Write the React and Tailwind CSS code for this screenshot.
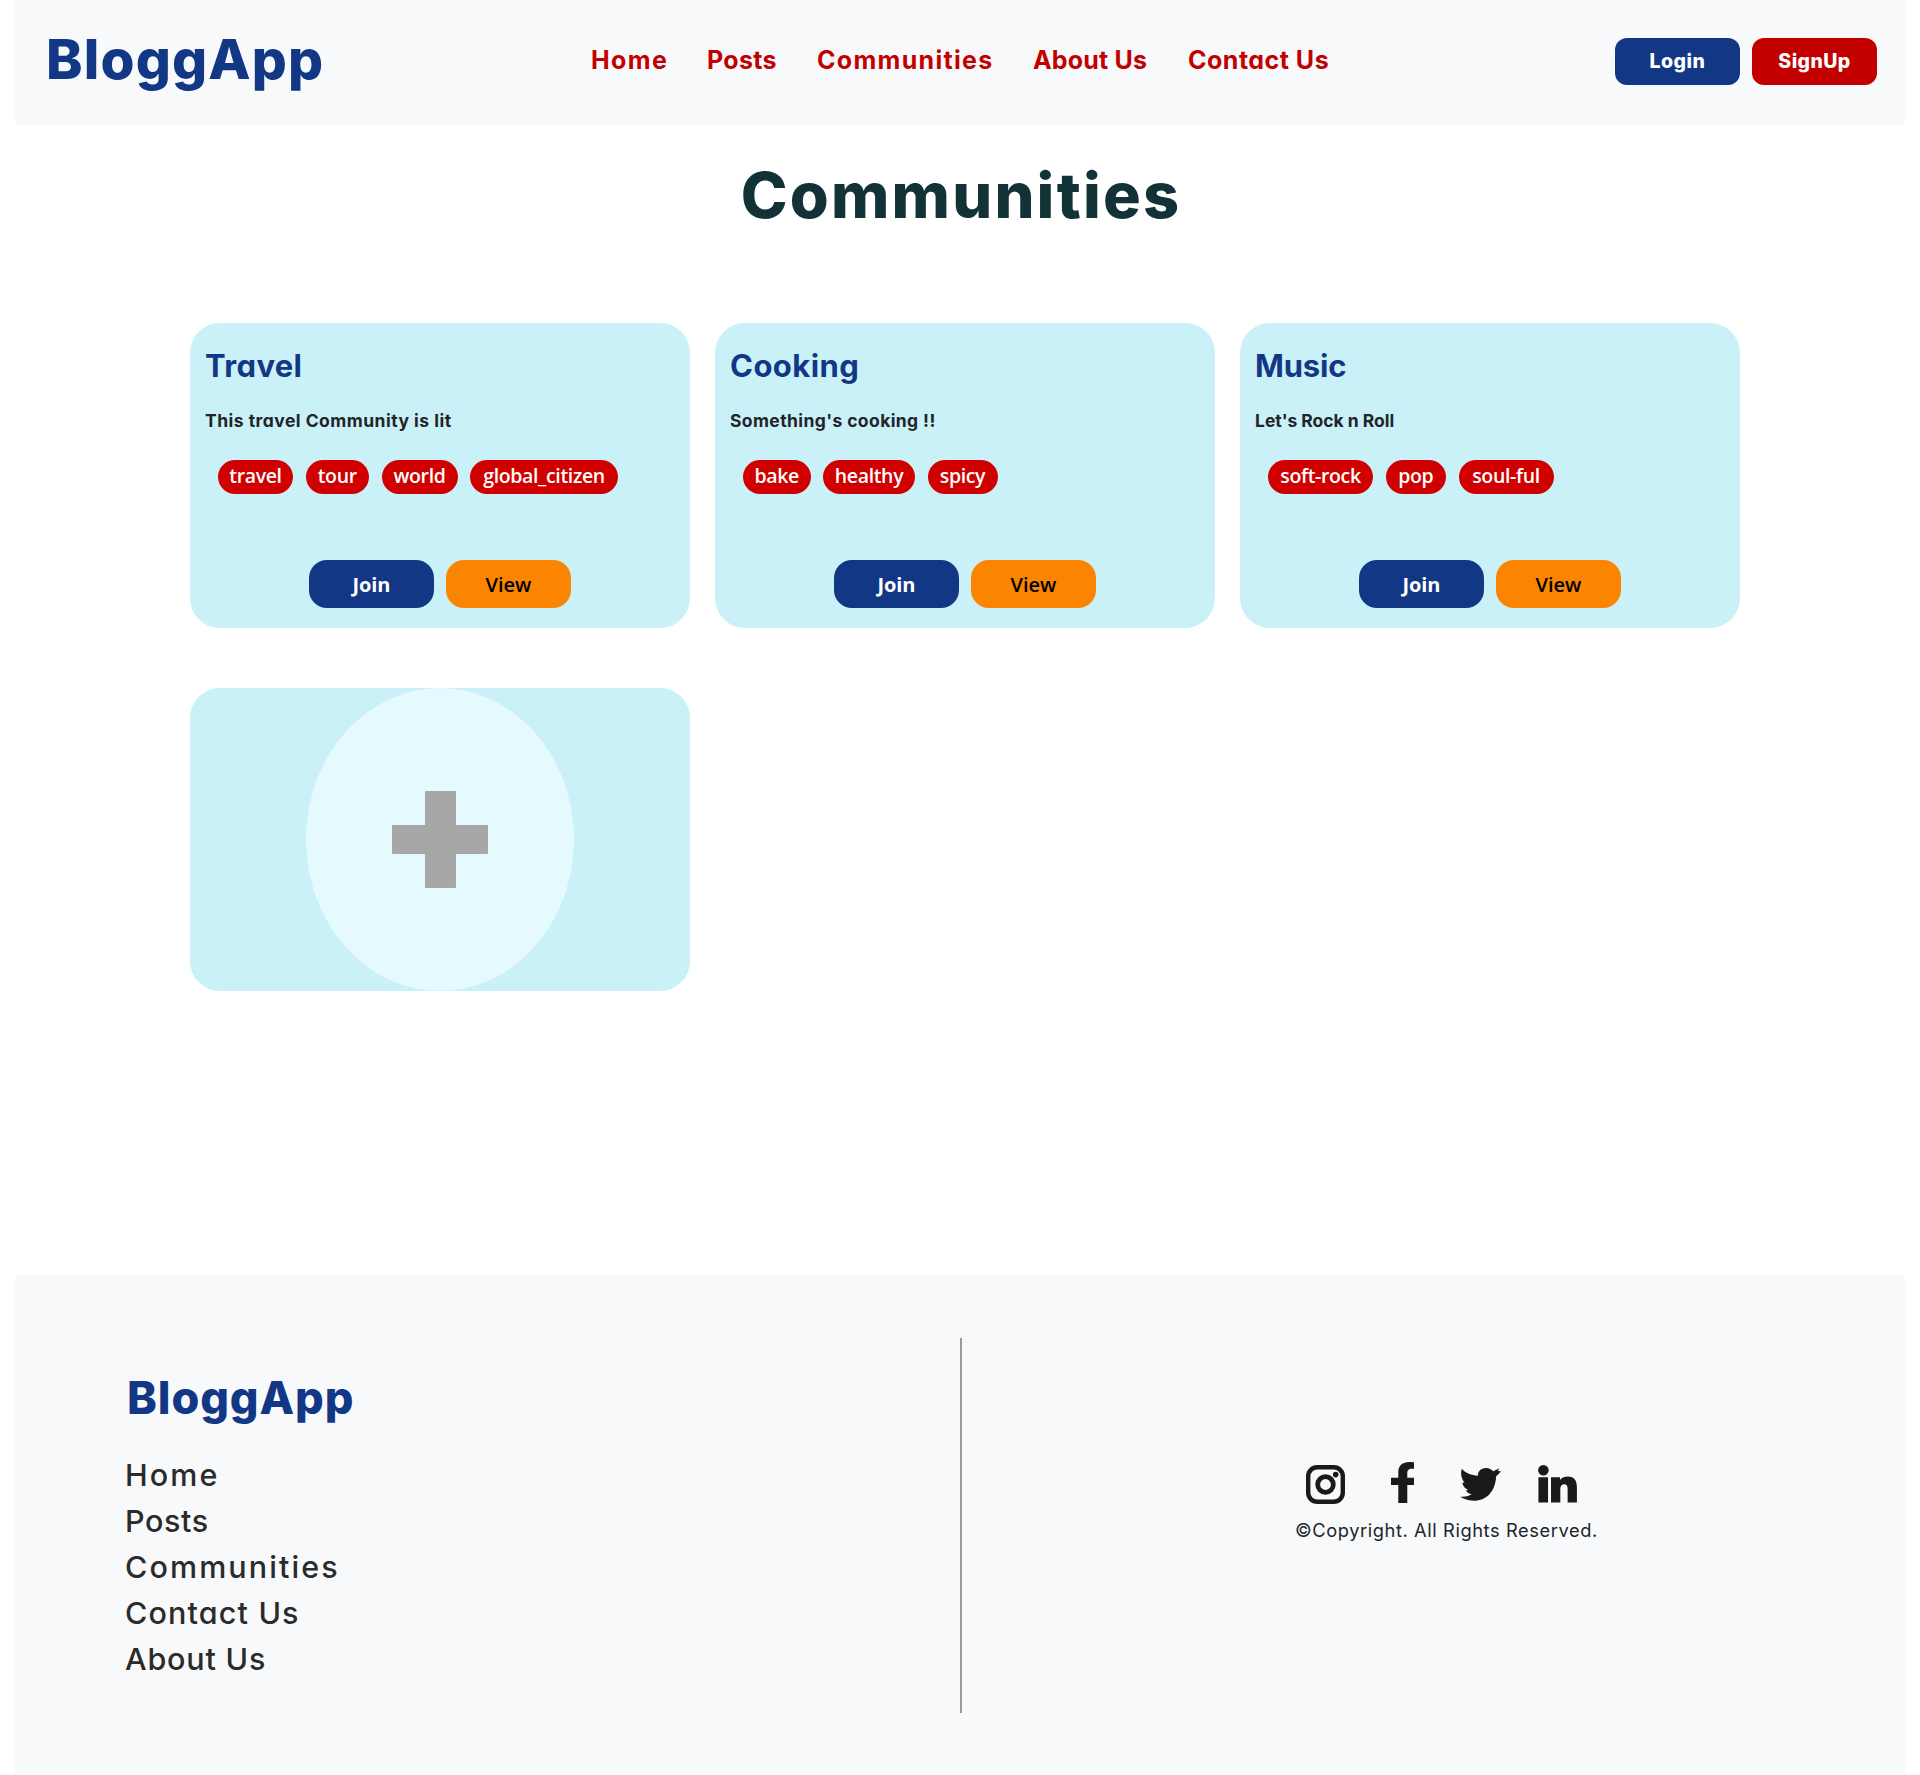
import { FaFacebookF } from "react-icons/fa";

const navLinks = [
  { label: "Home", cls: "w-[116px] tracking-[1.4px]" },
  { label: "Posts", cls: "w-[110px] tracking-[0.3px]" },
  { label: "Communities", cls: "w-[216px] tracking-[1.3px]" },
  { label: "About Us", cls: "w-[155px] tracking-[0.2px]" },
  { label: "Contact Us", cls: "w-[144px] tracking-[0.5px]" },
];

const communities = [
  {
    name: "Travel",
    nameCls: "tracking-[0.35px]",
    about: "This travel Community is lit",
    aboutCls: "tracking-[0.48px]",
    tags: [
      ["travel", "w-[75px]"],
      ["tour", "w-[63.5px]"],
      ["world", "w-[76px]"],
      ["global_citizen", "w-[148px]"],
    ],
  },
  {
    name: "Cooking",
    nameCls: "tracking-[0.45px]",
    about: "Something's cooking !!",
    aboutCls: "tracking-[0.4px]",
    tags: [
      ["bake", "w-[67.5px]"],
      ["healthy", "w-[92px]"],
      ["spicy", "w-[70px]"],
    ],
  },
  {
    name: "Music",
    nameCls: "tracking-[-0.2px]",
    about: "Let's Rock n Roll",
    aboutCls: "tracking-[-0.02px]",
    tags: [
      ["soft-rock", "w-[105px]"],
      ["pop", "w-[60.5px]"],
      ["soul-ful", "w-[95px]"],
    ],
  },
];

const footerLinks = [
  { label: "Home", cls: "tracking-[2.1px]" },
  { label: "Posts", cls: "tracking-[0.6px]" },
  { label: "Communities", cls: "tracking-[2.1px]" },
  { label: "Contact Us", cls: "tracking-[1.15px]" },
  { label: "About Us", cls: "tracking-[0.8px]" },
];

function InstagramIcon() {
  return (
    <svg viewBox="0 0 39 39" className="w-[39px] h-[39px] mt-[3px]" fill="none" stroke="currentColor">
      <rect x="2.2" y="2.2" width="34.6" height="34.6" rx="9" strokeWidth="4.4" />
      <circle cx="19.5" cy="19.5" r="7.8" strokeWidth="4.8" />
      <circle cx="29.7" cy="9.6" r="2.8" fill="currentColor" stroke="none" />
    </svg>
  );
}

function TwitterIcon() {
  return (
    <svg viewBox="0 0 122 99" className="w-[41px] h-[33px] ml-[46px] mt-1.5" fill="currentColor">
      <path d="M5 2C16 16 34 21 53 23C53 9 64 0 78 0C87 0 94 4 99 10L118 1L113 9L122 10C119 15 114 20 108 25C106 64 84 98 44 98C28 98 12 94 0 86C14 88 26 85 34 79C24 77 19 72 18 67L24 65C14 61 7 52 7 44L13 43C5 34 0 18 5 2Z" />
    </svg>
  );
}

function LinkedinIcon() {
  return (
    <svg viewBox="0 0 117 113" className="w-[39px] h-[37.5px] ml-[37px] mt-[3px]" fill="currentColor">
      <circle cx="16" cy="16" r="16" />
      <path d="M1 37h29v76H1zM39 37h27v8c6-7 14-10 24-10 18 0 27 12 27 32v46H89V71c0-9-4-13-10-13s-12 4-12 13v42H39z" />
    </svg>
  );
}

function Header() {
  return (
    <header className="flex items-center h-[125px] pl-[31px] pr-7 pb-[5px] bg-[#f8f9fb]">
      <div className="w-[545px] -mt-0.5 text-[55px] leading-[80px] font-extrabold tracking-[1.15px] text-[#123885]">BloggApp</div>
      <nav className="flex flex-1 text-[25px] leading-10 font-bold text-[#c30000]">
        {navLinks.map((l) => (
          <a key={l.label} className={`whitespace-nowrap ${l.cls}`}>{l.label}</a>
        ))}
      </nav>
      <div className="flex gap-3 mt-[3px] text-[19.5px] font-extrabold text-white">
        <button className="w-[125px] h-[47px] rounded-xl bg-[#123885] tracking-[0.5px]">Login</button>
        <button className="w-[125px] h-[47px] rounded-xl bg-[#c30000] tracking-[0.4px]">SignUp</button>
      </div>
    </header>
  );
}

function CommunityCard({ c }) {
  return (
    <article className="flex flex-col h-[305px] pt-[23px] px-[15px] rounded-[30px] bg-[#caf0f8]">
      <h2 className={`text-[31px] leading-10 font-bold text-[#123885] ${c.nameCls}`}>{c.name}</h2>
      <p className={`mt-[21px] text-[17.5px] leading-7 font-bold text-[#212529] ${c.aboutCls}`}>{c.about}</p>
      <div className="flex gap-[12.5px] mt-[25px] pl-[13px] font-['Open_Sans',sans-serif] text-[19.5px] font-semibold tracking-[-0.35px] text-white">
        {c.tags.map(([t, w]) => (
          <span key={t} className={`h-[34px] leading-8 rounded-full bg-[#d00000] text-center whitespace-nowrap ${w}`}>{t}</span>
        ))}
      </div>
      <div className="flex justify-center gap-3 mt-[66px] font-['Open_Sans',sans-serif] text-xl">
        <button className="w-[125px] h-12 pt-0.5 rounded-[18px] bg-[#123885] font-bold tracking-[-0.1px] text-white">Join</button>
        <button className="w-[125px] h-12 pt-0.5 rounded-[18px] bg-[#fb8500] font-semibold text-black">View</button>
      </div>
    </article>
  );
}

function AddCard() {
  return (
    <button className="flex justify-center h-[303px] rounded-[30px] bg-[#caf0f8]">
      <span className="flex items-center justify-center w-[268px] h-full rounded-[50%] bg-[#e4faff]">
        <svg viewBox="0 0 96 97" className="w-24 h-[97px]" fill="#a7a7a7">
          <path d="M34 0h29q1 0 1 1v33h31q1 0 1 1v27q0 1-1 1H64v33q0 1-1 1H34q-1 0-1-1V63H1q-1 0-1-1V35q0-1 1-1h32V1q0-1 1-1z" />
        </svg>
      </span>
    </button>
  );
}

function Footer() {
  return (
    <footer className="flex h-[500px] mt-[284px] bg-[#f8f9fb]">
      <div className="w-[945px] pt-[93px] pl-[110px]">
        <div className="pl-[2px] text-[45px] leading-[60px] font-extrabold tracking-[0.9px] text-[#123885]">BloggApp</div>
        <ul className="mt-6 text-[30.5px] leading-[46px] font-medium text-[#2b2b2b]">
          {footerLinks.map((l) => (
            <li key={l.label} className={l.cls}>{l.label}</li>
          ))}
        </ul>
      </div>
      <div className="w-0.5 h-[375px] mt-[63px] bg-[#98999b]" />
      <div className="flex-1 pt-[187px] pl-[333px]">
        <div className="flex items-start h-[54px] pl-[11px] text-[#1a1a1a]">
          <InstagramIcon />
          <FaFacebookF preserveAspectRatio="none" viewBox="22.9 0 256.3 512" className="w-[23px] h-[41px] ml-[46px]" />
          <TwitterIcon />
          <LinkedinIcon />
        </div>
        <p className="text-[18.3px] leading-7 tracking-[0.58px] text-[#212529]">©Copyright. All Rights Reserved.</p>
      </div>
    </footer>
  );
}

export default function App() {
  return (
    <div className="px-[15px] bg-white font-['Inter',sans-serif] [font-feature-settings:'cv11']">
      <Header />
      <main>
        <h1 className="mt-[22px] pl-[2px] text-center text-[63px] leading-[96px] font-extrabold tracking-[2.2px] text-[#123238]">Communities</h1>
        <section className="grid grid-cols-[500px_500px_500px] gap-x-[25px] gap-y-[60px] mt-20 ml-[175px]">
          {communities.map((c) => (
            <CommunityCard key={c.name} c={c} />
          ))}
          <AddCard />
        </section>
      </main>
      <Footer />
    </div>
  );
}
